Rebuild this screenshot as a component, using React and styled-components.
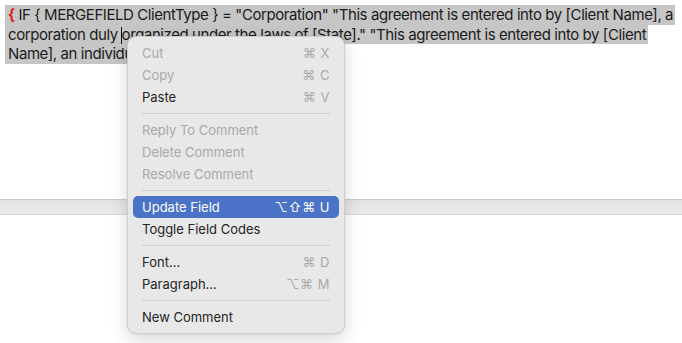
import React from 'react';
import styled, { createGlobalStyle } from 'styled-components';

const GlobalStyle = createGlobalStyle`
  html, body {
    margin: 0;
    padding: 0;
    background: #ffffff;
  }
  body {
    width: 682px;
    height: 343px;
    overflow: hidden;
    position: relative;
  }
`;

const Page = styled.div`
  position: relative;
  width: 682px;
  height: 343px;
  background: #ffffff;
`;

const Document = styled.div`
  padding: 5px 0 0 5px;
  height: 199px;
  box-sizing: border-box;
  font-family: Inter, "Noto Sans", sans-serif;
  font-size: 15px;
  letter-spacing: -0.42px;
  color: #1b1b1b;
`;

const Line = styled.div`
  height: 19.5px;
  white-space: nowrap;
`;

const Mark = styled.span`
  display: inline-block;
  line-height: 19.5px;
  padding: 0 2px 0 3px;
  background: #c6c6c6;
`;

const Brace = styled.span`
  color: #e0201b;
  font-weight: 700;
`;

const Caret = styled.span`
  display: inline-block;
  width: 1px;
  height: 17px;
  margin: 0 0 0 -1px;
  vertical-align: -4px;
  background: #111;
`;

const PageBreak = styled.div`
  height: 14px;
  border-top: 1px solid #cbcbcb;
  border-bottom: 1px solid #d4d4d4;
  background: linear-gradient(#e2e2e2, #ebebeb);
`;

const Menu = styled.div`
  position: absolute;
  left: 127px;
  top: 36px;
  width: 218px;
  box-sizing: border-box;
  padding: 5px 0;
  background: #e8e8e8;
  border: 1px solid #cdcdcd;
  border-radius: 9px;
  box-shadow: 0 6px 18px rgba(0, 0, 0, 0.16), 0 0 1px rgba(0, 0, 0, 0.2);
  font-family: Inter, "DejaVu Sans", sans-serif;
  font-size: 13px;
`;

const Item = styled.div`
  display: flex;
  align-items: center;
  justify-content: space-between;
  height: 22px;
  margin: 0 5px;
  padding: 0 9px;
  border-radius: 5px;
  color: ${(p) => (p.$active ? '#ffffff' : p.$disabled ? '#a9a9a9' : '#242424')};
  background: ${(p) => (p.$active ? '#4a72c6' : 'transparent')};
`;

const Shortcut = styled.span`
  font-family: Inter, "DejaVu Sans", sans-serif;
  color: ${(p) => (p.$active ? '#ffffff' : '#a9a9a9')};
  letter-spacing: 0.5px;
`;

const Separator = styled.div`
  height: 1px;
  margin: 5px 14px;
  background: #cfcfcf;
`;

const groups = [
  [
    { label: 'Cut', key: '⌘ X', disabled: true },
    { label: 'Copy', key: '⌘ C', disabled: true },
    { label: 'Paste', key: '⌘ V' },
  ],
  [
    { label: 'Reply To Comment', disabled: true },
    { label: 'Delete Comment', disabled: true },
    { label: 'Resolve Comment', disabled: true },
  ],
  [
    { label: 'Update Field', key: '⌥⇧⌘ U', active: true },
    { label: 'Toggle Field Codes' },
  ],
  [
    { label: 'Font...', key: '⌘ D' },
    { label: 'Paragraph...', key: '⌥⌘ M' },
  ],
  [{ label: 'New Comment' }],
];

const ContextMenu = () => (
  <Menu>
    {groups.map((group, gi) => (
      <React.Fragment key={gi}>
        {gi > 0 && <Separator />}
        {group.map((item) => (
          <Item key={item.label} $active={item.active} $disabled={item.disabled}>
            <span>{item.label}</span>
            {item.key && <Shortcut $active={item.active}>{item.key}</Shortcut>}
          </Item>
        ))}
      </React.Fragment>
    ))}
  </Menu>
);

export default function App() {
  return (
    <Page>
      <GlobalStyle />
      <Document>
        <Line>
          <Mark>
            <Brace>{'{'}</Brace> IF {'{'} MERGEFIELD ClientType {'}'} = "Corporation" "This agreement is entered into by [Client Name], a
          </Mark>
        </Line>
        <Line>
          <Mark>
            corporation duly <Caret />organized under the laws of [State]." "This agreement is entered into by [Client
          </Mark>
        </Line>
        <Line>
          <Mark>Name], an individual." {'}'}</Mark>
        </Line>
      </Document>
      <PageBreak />
      <ContextMenu />
    </Page>
  );
}
